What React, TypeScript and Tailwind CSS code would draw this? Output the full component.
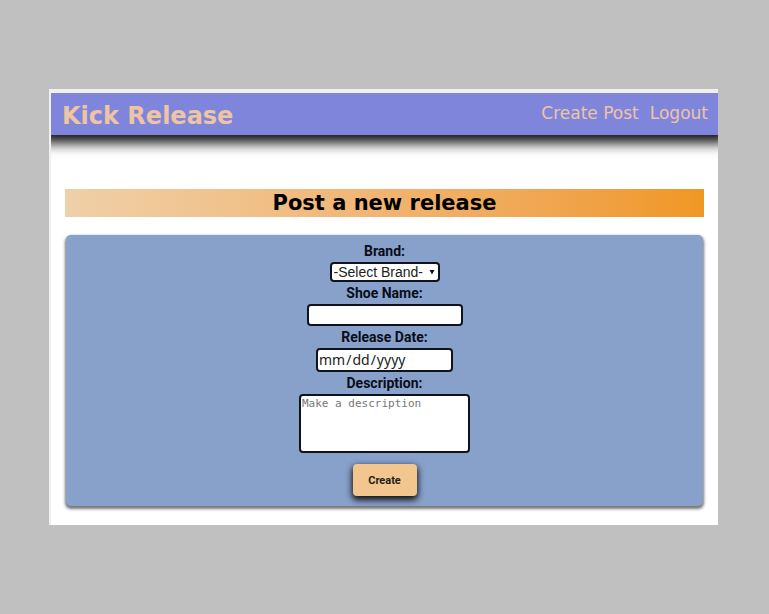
import type { ReactNode } from "react";

const display = "font-['DejaVu_Sans',sans-serif]";
const field = "rounded border-2 border-[#10131c] bg-white text-[#222]";

function Field({ id, label, children }: { id: string; label: string; children: ReactNode }) {
  return (
    <div className="flex flex-col items-center">
      <label
        htmlFor={id}
        className="flex h-[22px] items-center font-[Roboto,sans-serif] text-sm font-bold text-[#0a0d18]"
      >
        {label}
      </label>
      {children}
    </div>
  );
}

export default function App() {
  return (
    <div className="min-h-screen bg-[#c0c0c0] py-[89px] pr-[51px] pl-[49px]">
      <div className="border-t-4 border-l-2 border-[#eff0f2] bg-white pb-[19px]">
        <header
          className={`flex h-[42px] items-center justify-between bg-[#8085dc] pr-[10px] pl-[11px] text-[#edc5a3] shadow-[0_-2px_12px_10px_#111] [clip-path:inset(0_0_-30px_0)] ${display}`}
        >
          <a href="#home" className="pt-1 text-2xl font-bold">Kick Release</a>
          <nav className="flex gap-[11px] text-[17px]">
            <a href="#create">Create Post</a>
            <a href="#logout">Logout</a>
          </nav>
        </header>
        <main className="px-[14px] pt-[54px]">
          <h1
            className={`flex h-7 items-center justify-center bg-linear-to-r from-[#efd0a8] to-[#f09722] pt-0.5 text-[21px] font-bold text-black ${display}`}
          >
            Post a new release
          </h1>
          <form
            className="mx-px mt-[18px] flex flex-col items-center rounded-[5px] bg-[#87a1ca] pt-[5px] pb-[10px] shadow-[0_2px_3px_1px_#777]"
            onSubmit={(event) => event.preventDefault()}
          >
            <Field id="brand" label="Brand:">
              <div className="relative">
                <select
                  id="brand"
                  className={`block h-5 w-[110px] appearance-none pl-0.5 font-['Liberation_Sans',sans-serif] text-sm leading-4 ${field}`}
                >
                  <option>-Select Brand-</option>
                </select>
                <svg viewBox="0 0 6 6" className="pointer-events-none absolute top-[7px] right-[5px] size-[6px]" aria-hidden="true">
                  <path d="M0.5 1h5L3 5.5z" fill="#111" />
                </svg>
              </div>
            </Field>
            <Field id="shoe" label="Shoe Name:">
              <input id="shoe" type="text" className={`h-[22px] w-[156px] ${field}`} />
            </Field>
            <Field id="date" label="Release Date:">
              <input
                id="date"
                type="date"
                className={`h-6 w-[137px] font-['Noto_Sans',sans-serif] text-sm [&::-webkit-calendar-picker-indicator]:hidden ${field}`}
              />
            </Field>
            <Field id="description" label="Description:">
              <textarea
                id="description"
                placeholder="Make a description"
                className={`h-[59px] w-[171px] resize-none px-px font-['DejaVu_Sans_Mono',monospace] text-[11px] placeholder:text-[#777] ${field}`}
              />
            </Field>
            <button
              type="submit"
              className="mt-[11px] h-8 w-16 rounded bg-[#f2c68e] pt-0.5 font-[Roboto,sans-serif] text-[11px] font-bold text-[#251d17] shadow-[0_3px_6px_1px_#111]"
            >
              Create
            </button>
          </form>
        </main>
      </div>
    </div>
  );
}
